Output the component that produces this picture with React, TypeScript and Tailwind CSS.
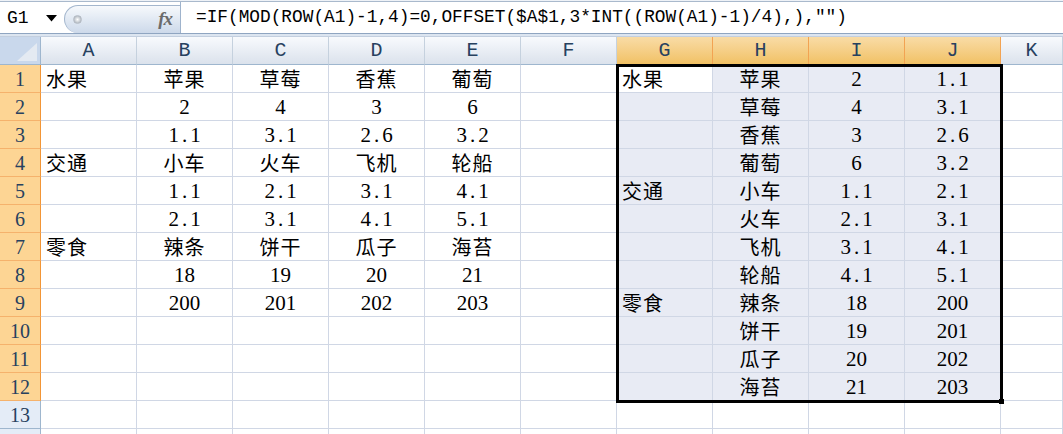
import React from "react";

const COLS = ["A", "B", "C", "D", "E", "F", "G", "H", "I", "J", "K"];

const LEFT: string[][] = [
  ["水果", "苹果", "草莓", "香蕉", "葡萄"],
  ["", "2", "4", "3", "6"],
  ["", "1.1", "3.1", "2.6", "3.2"],
  ["交通", "小车", "火车", "飞机", "轮船"],
  ["", "1.1", "2.1", "3.1", "4.1"],
  ["", "2.1", "3.1", "4.1", "5.1"],
  ["零食", "辣条", "饼干", "瓜子", "海苔"],
  ["", "18", "19", "20", "21"],
  ["", "200", "201", "202", "203"],
];

const RIGHT: string[][] = [
  ["水果", "苹果", "2", "1.1"],
  ["", "草莓", "4", "3.1"],
  ["", "香蕉", "3", "2.6"],
  ["", "葡萄", "6", "3.2"],
  ["交通", "小车", "1.1", "2.1"],
  ["", "火车", "2.1", "3.1"],
  ["", "飞机", "3.1", "4.1"],
  ["", "轮船", "4.1", "5.1"],
  ["零食", "辣条", "18", "200"],
  ["", "饼干", "19", "201"],
  ["", "瓜子", "20", "202"],
  ["", "海苔", "21", "203"],
];

// 13 full rows, the 14th is only a sliver at the bottom edge
const ROW_COUNT = 14;

const valueAt = (r: number, c: number) => {
  if (c <= 4) return LEFT[r]?.[c] ?? "";
  if (c >= 6 && c <= 9) return RIGHT[r]?.[c - 6] ?? "";
  return "";
};

const CellText = ({ v }: { v: string }) => {
  if (!v) return null;
  // numbers vs chinese text
  if (/^[0-9.]+$/.test(v)) {
    const isDecimal = v.includes(".");
    return (
      <span
        className={`font-['Liberation_Serif',serif] text-[21px] leading-none pt-[2px] ${
          isDecimal ? "tracking-[3px] pl-[3px]" : ""
        }`}
      >
        {v}
      </span>
    );
  }
  return (
    <span className="font-['Noto_Sans_CJK_SC',sans-serif] font-normal text-[20px] leading-none tracking-[1px]">
      {v}
    </span>
  );
};

export default function App() {
  return (
    <div className="w-[1063px] h-[434px] overflow-hidden bg-white text-black select-none">
      {/* formula bar */}
      <div className="h-px bg-[#eef2f7]" />
      <div className="h-px bg-[#a9b9cc]" />
      <div className="h-[31px] flex bg-white">
        <div className="w-[64px] flex items-center pl-[7px]">
          <span className="font-['Liberation_Mono',monospace] text-[18px] leading-none">G1</span>
          <svg width="11" height="7" viewBox="0 0 11 7" className="ml-[17px] mt-[2px]">
            <path d="M0 0 H11 L5.5 6.5 Z" fill="#000" />
          </svg>
        </div>
        <div className="mt-[3px] w-[116px] rounded-l-[14px] border-t border-l border-[#a3b6cd] bg-linear-to-b from-[#f6f9fc] to-[#cdd9ea] flex items-center justify-between pl-[8px] pr-[8px]">
          <span className="w-[9px] h-[9px] rounded-full bg-radial from-[#ffffff] to-[#9aa3ad] border border-[#b5bcc5]" />
          <span className="font-['Liberation_Serif',serif] italic font-bold text-[19px] leading-none text-[#6b6b6b] tracking-[-1px] mb-[2px]">
            fx
          </span>
        </div>
        <div className="flex-1 border-l border-[#9fb3cc] flex items-center pl-[15px]">
          <span className="font-['Liberation_Mono',monospace] text-[17.8px] leading-none whitespace-nowrap">
            =IF(MOD(ROW(A1)-1,4)=0,OFFSET($A$1,3*INT((ROW(A1)-1)/4),),"")
          </span>
        </div>
      </div>
      <div className="h-px bg-[#8fa5c1]" />
      <div className="h-[3px] bg-[#dce5f0] border-b border-[#c3cfdf]" />

      {/* sheet grid */}
      <div className="relative grid grid-cols-[41px_repeat(10,96px)_1fr] auto-rows-[28px]">
        {/* corner */}
        <div className="bg-[#c9d8ec] border-r border-b border-[#9eb6ce] flex items-end justify-end pr-[3px] pb-[3px]">
          <svg width="20" height="18" viewBox="0 0 20 18">
            <path d="M20 0 V18 H0 Z" fill="#e4eaf2" />
          </svg>
        </div>
        {COLS.map((col, c) => {
          const sel = c >= 6 && c <= 9;
          return (
            <div
              key={col}
              className={`flex items-center justify-center border-r border-b font-['Liberation_Mono',monospace] text-[20px] leading-none text-[#27415f] ${
                sel
                  ? "bg-linear-to-b from-[#f9dca6] to-[#f1c164] border-r-[#f2a352] border-b-[#f29536]"
                  : "bg-linear-to-b from-[#f8fafd] to-[#dbe2ec] border-r-[#c5d1de] border-b-[#9eb6ce]"
              }`}
            >
              {col}
            </div>
          );
        })}

        {Array.from({ length: ROW_COUNT }, (_, r) => {
          const rowSel = r < 12;
          return (
            <React.Fragment key={r}>
              <div
                className={`flex items-center justify-center border-r border-b font-['Liberation_Serif',serif] text-[20px] leading-none text-[#27415f] ${
                  rowSel
                    ? "bg-[#fdd594] border-r-[#f29536] border-b-[#f5b26c]"
                    : "bg-[#e4ecf7] border-r-[#9eb6ce] border-b-[#9eb6ce]"
                }`}
              >
                {r < 13 ? r + 1 : ""}
              </div>
              {COLS.map((col, c) => {
                const v = valueAt(r, c);
                const inSel = r < 12 && c >= 6 && c <= 9;
                const active = r === 0 && c === 6;
                const leftAlign = c === 0 || c === 6;
                return (
                  <div
                    key={col}
                    className={`flex items-center border-r border-b border-[#d0d7e5] ${
                      leftAlign ? "justify-start pl-[5px]" : "justify-center"
                    } ${inSel && !active ? "bg-[#e8ebf4]" : "bg-white"}`}
                  >
                    <CellText v={v} />
                  </div>
                );
              })}
            </React.Fragment>
          );
        })}

        {/* selection G1:J12 */}
        <div className="absolute left-[616px] top-[27px] w-[387px] h-[339px] border-[3px] border-black z-10 pointer-events-none">
          <div className="absolute -right-[4px] -bottom-[4px] w-[5px] h-[5px] bg-black" />
        </div>
      </div>
    </div>
  );
}
